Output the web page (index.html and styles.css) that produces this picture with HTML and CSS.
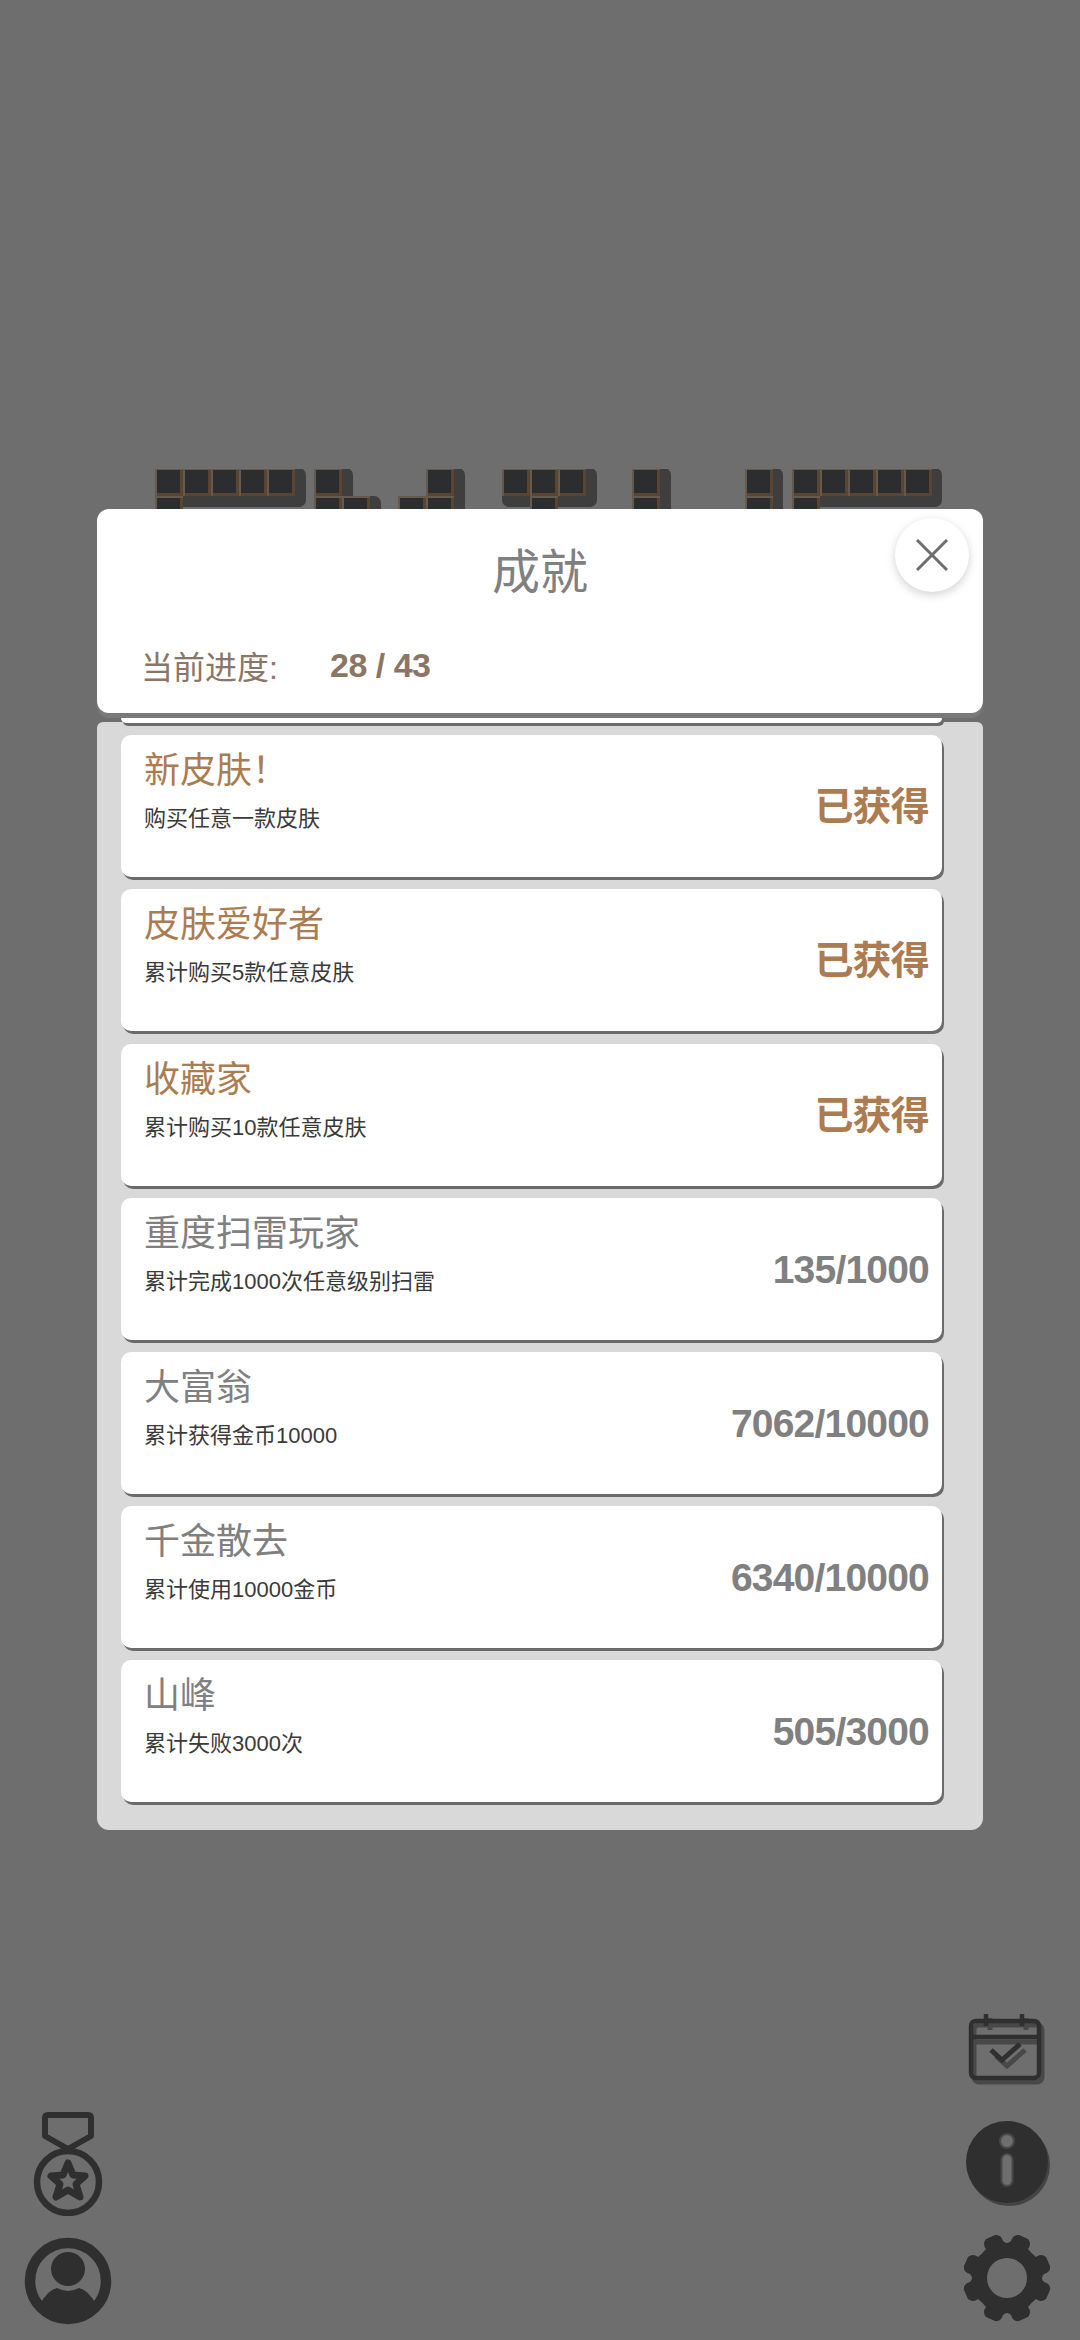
FILE: index.html
```html
<!DOCTYPE html>
<html lang="zh-CN">
<head>
<meta charset="utf-8">
<title>成就</title>
<link rel="stylesheet" href="styles.css">
</head>
<body>
<div class="screen">
  <svg class="backdrop" width="1080" height="40" viewBox="0 469 1080 40">
    <defs>
      <g id="c"><rect x="0" y="0" width="28" height="28" fill="#5a4530"/><rect x="0" y="0" width="28" height="2" fill="#665a4e"/><rect x="0" y="0" width="2" height="28" fill="#665a4e"/><rect x="2" y="2" width="23" height="23" fill="#2b2d2f"/></g>
    </defs>
    <g fill="#3e3e3e">
      <rect x="157" y="468" width="149" height="39" rx="7"/>
      <rect x="316" y="468" width="37" height="50" rx="7"/>
      <rect x="344" y="496" width="37" height="30" rx="7"/>
      <rect x="400" y="496" width="65" height="30" rx="4"/>
      <rect x="428" y="468" width="37" height="50" rx="7"/>
      <rect x="502" y="468" width="95" height="39" rx="7"/>
      <rect x="633" y="468" width="38" height="50" rx="7"/>
      <rect x="746" y="468" width="37" height="50" rx="7"/>
      <rect x="793" y="468" width="149" height="39" rx="7"/>
    </g>
    <use href="#c" x="155" y="468"/><use href="#c" x="183" y="468"/><use href="#c" x="211" y="468"/><use href="#c" x="239" y="468"/><use href="#c" x="267" y="468"/>
    <use href="#c" x="155" y="496"/>
    <use href="#c" x="314" y="468"/><use href="#c" x="314" y="496"/><use href="#c" x="342" y="496"/>
    <use href="#c" x="398" y="496"/><use href="#c" x="426" y="496"/><use href="#c" x="426" y="468"/>
    <use href="#c" x="502" y="468"/><use href="#c" x="530" y="468"/><use href="#c" x="558" y="468"/><use href="#c" x="530" y="496"/>
    <use href="#c" x="632" y="468"/><use href="#c" x="632" y="496"/>
    <use href="#c" x="745" y="468"/><use href="#c" x="745" y="496"/>
    <use href="#c" x="792" y="468"/><use href="#c" x="820" y="468"/><use href="#c" x="848" y="468"/><use href="#c" x="876" y="468"/><use href="#c" x="904" y="468"/>
    <use href="#c" x="792" y="496"/>
  </svg>

  <div class="modal">
    <div class="modal-head">
      <h1 class="modal-title">成就</h1>
      <div class="progress">
        <span class="progress-label">当前进度:</span>
        <span class="progress-value">28 / 43</span>
      </div>
      <button class="close-btn">
        <svg width="32" height="32" viewBox="0 0 32 32"><path d="M1 1L31 31M31 1L1 31" stroke="#6e6e6e" stroke-width="3" fill="none"/></svg>
      </button>
    </div>
    <div class="modal-list">
      <div class="card card-cut"></div>
      <div class="card done">
        <div class="card-text"><div class="card-name">新皮肤！</div><div class="card-desc">购买任意一款皮肤</div></div>
        <div class="card-state">已获得</div>
      </div>
      <div class="card done">
        <div class="card-text"><div class="card-name">皮肤爱好者</div><div class="card-desc">累计购买5款任意皮肤</div></div>
        <div class="card-state">已获得</div>
      </div>
      <div class="card done">
        <div class="card-text"><div class="card-name">收藏家</div><div class="card-desc">累计购买10款任意皮肤</div></div>
        <div class="card-state">已获得</div>
      </div>
      <div class="card">
        <div class="card-text"><div class="card-name">重度扫雷玩家</div><div class="card-desc">累计完成1000次任意级别扫雷</div></div>
        <div class="card-state">135/1000</div>
      </div>
      <div class="card">
        <div class="card-text"><div class="card-name">大富翁</div><div class="card-desc">累计获得金币10000</div></div>
        <div class="card-state">7062/10000</div>
      </div>
      <div class="card">
        <div class="card-text"><div class="card-name">千金散去</div><div class="card-desc">累计使用10000金币</div></div>
        <div class="card-state">6340/10000</div>
      </div>
      <div class="card">
        <div class="card-text"><div class="card-name">山峰</div><div class="card-desc">累计失败3000次</div></div>
        <div class="card-state">505/3000</div>
      </div>
    </div>
  </div>

  <div class="dock">
    <div class="dock-col dock-left">
      <svg width="104" height="104" viewBox="0 0 104 104">
        <path d="M25 3H65Q68 3 68 6V24L45 37L22 24V6Q22 3 25 3Z" fill="none" stroke="#2f2f2f" stroke-width="6" stroke-linejoin="round"/>
        <circle cx="45" cy="70" r="31" fill="none" stroke="#2f2f2f" stroke-width="6.500"/>
        <path d="M45 51L50 63L62 64L53 72L57 85L45 78L33 85L37 72L28 64L40 63Z" fill="none" stroke="#2f2f2f" stroke-width="7" stroke-linejoin="round"/>
      </svg>
      <svg class="user-icon" width="88" height="88" viewBox="0 0 88 88">
        <circle cx="44" cy="44" r="38" fill="none" stroke="#2f2f2f" stroke-width="10.500"/>
        <circle cx="44" cy="32" r="17" fill="#2f2f2f"/>
        <path d="M16 67Q24 53 33 51Q44 57 55 51Q64 53 72 67Q60 84 44 84Q28 84 16 67Z" fill="#2f2f2f"/>
      </svg>
    </div>
    <div class="dock-col dock-right">
      <svg class="cal-icon" width="80" height="74" viewBox="-1 0 80 74">
        <g fill="none" stroke="#484848" stroke-width="5" transform="translate(3 4)">
          <rect x="3" y="8" width="68" height="57" rx="5"/><path d="M3 25H71M19 1V13M55 1V13"/><path d="M25 39L36 49L54 33"/>
        </g>
        <g fill="none" stroke="#2f2f2f" stroke-width="4.500">
          <rect x="3" y="8" width="68" height="57" rx="5"/><path d="M3 24H71M18 1V13M54 1V13"/><path d="M23 37L34 47L52 31" stroke-width="5"/>
        </g>
      </svg>
      <svg width="88" height="88" viewBox="-1 0 88 88">
        <circle cx="45" cy="46" r="41" fill="#444"/>
        <circle cx="43" cy="43" r="41" fill="#2f2f2f"/>
        <circle cx="43" cy="22" r="7" fill="#6e6e6e" stroke="#484848" stroke-width="2"/>
        <rect x="37.500" y="35" width="11" height="32" rx="5.500" fill="#6e6e6e" stroke="#484848" stroke-width="2"/>
      </svg>
      <svg width="90" height="90" viewBox="-45 -45 90 90">
        <path fill="#2f2f2f" fill-rule="evenodd" d="M-12 -43Q-6 -44 -4 -37Q0 -33 4 -37Q6 -44 12 -43L21 -39Q25 -34 21 -29Q24 -25 29 -21Q34 -25 39 -21L43 -12Q44 -6 37 -4Q33 0 37 4Q44 6 43 12L39 21Q34 25 29 21Q25 24 21 29Q25 34 21 39L12 43Q6 44 4 37Q0 33 -4 37Q-6 44 -12 43L-21 39Q-25 34 -21 29Q-24 25 -29 21Q-34 25 -39 21L-43 12Q-44 6 -37 4Q-33 0 -37 -4Q-44 -6 -43 -12L-39 -21Q-34 -25 -29 -21Q-25 -24 -21 -29Q-25 -34 -21 -39ZM20 0A20 20 0 1 0 -20 0A20 20 0 1 0 20 0Z"/>
      </svg>
    </div>
  </div>
</div>
</body>
</html>
```
FILE: styles.css
```css
html, body { margin: 0; padding: 0; }
body { background: #6e6e6e; font-family: "Liberation Sans", "Noto Sans CJK SC", sans-serif; }

.screen { width: 1080px; height: 2340px; overflow: hidden; display: flex; flex-direction: column; }
.backdrop { display: block; margin-top: 469px; flex: none; filter: blur(0.5px); }

.modal { margin: 0 97px; width: 886px; flex: none; }
.modal-head { position: relative; z-index: 2; height: 204px; background: #fff; border-radius: 12px; box-shadow: 0 5px 0 #7a7a7a; }
.modal-title { margin: 0; padding-top: 33px; text-align: center; font-size: 48px; line-height: 62px; font-weight: 400; color: #808080; }
.progress { margin-top: 39px; padding-left: 44px; display: flex; align-items: center; height: 44px; }
.progress-label { width: 189px; font-size: 32px; color: #8b7565; }
.progress-value { font-size: 34px; font-weight: 700; color: #8b7565; letter-spacing: -0.5px; }
.close-btn { position: absolute; right: 14px; top: 9px; width: 74px; height: 74px; padding: 0; border: 0; border-radius: 50%; background: #fff; box-shadow: 0 3px 10px rgba(0,0,0,.18); display: flex; align-items: center; justify-content: center; }

.modal-list { margin-top: 9px; padding: 0 41px 28px 24px; background: #d9d9d9; border-radius: 6px 6px 12px 12px; display: flex; flex-direction: column; gap: 12.200px; }
.card { flex: none; height: 142px; background: #fff; border-radius: 10px; box-shadow: 2px 3px 0 #6b6b6b; display: flex; align-items: flex-start; justify-content: space-between; }
.card-cut { height: 5px; margin-top: -4px; border-radius: 0 0 10px 10px; }
.card-text { padding: 11px 0 0 23px; }
.card-name { font-size: 36px; line-height: 50px; color: #808080; }
.card-desc { margin-top: 8px; font-size: 22px; line-height: 30px; color: #3a3a3a; }
.card-state { margin-top: 47px; padding-right: 13px; font-size: 39px; line-height: 50px; font-weight: 700; color: #808080; letter-spacing: -0.8px; }
.done .card-name, .done .card-state { color: #ad7b50; }

.dock { flex: 1; display: flex; justify-content: space-between; align-items: flex-end; padding: 0 28px 15px 23px; }
.dock-col { display: flex; flex-direction: column; gap: 21px; }
.dock-left { align-items: flex-start; }
.user-icon { margin-left: 1px; }
.dock-right { align-items: center; gap: 26px; margin-bottom: 2px; }
.cal-icon { margin-bottom: 6px; }
```
